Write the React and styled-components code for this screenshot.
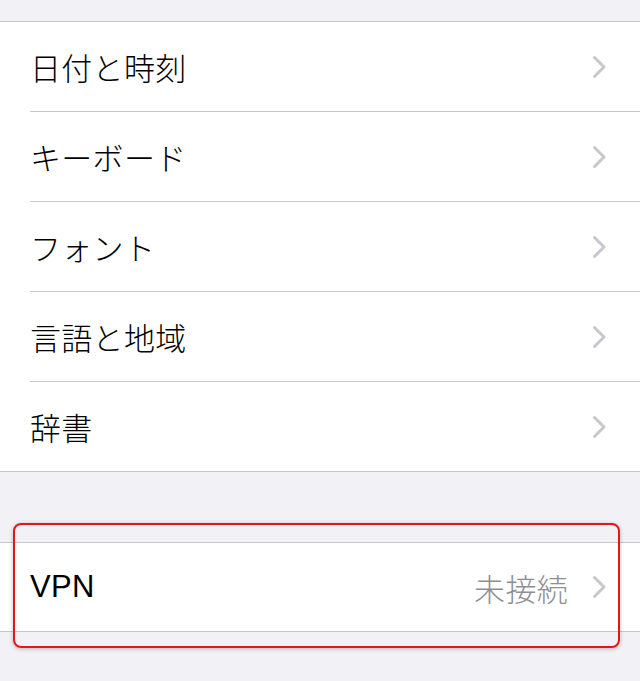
import React from "react";
import styled, { createGlobalStyle } from "styled-components";

const GlobalStyle = createGlobalStyle`
    html, body {
        margin: 0;
        padding: 0;
        background: #f1f1f6;
    }
    body {
        font-family: "Liberation Sans", "Noto Sans CJK JP", sans-serif;
        -webkit-font-smoothing: antialiased;
    }
`;

const Page = styled.div`
    width: 640px;
    height: 681px;
    overflow: hidden;
    background: #f1f1f6;
    padding-top: 21px;
    box-sizing: border-box;
`;

const Group = styled.div`
    position: relative;
    background: #ffffff;
    border-top: 1px solid #c8c7cc;
    border-bottom: 1px solid #c8c7cc;
    margin-bottom: ${(p) => p.gap || 0}px;
`;

const Row = styled.div`
    height: ${(p) => p.h || 90}px;
    display: flex;
    align-items: center;
    padding-left: 30px;
`;

const RowBody = styled.div`
    flex: 1;
    height: 100%;
    display: flex;
    align-items: center;
    padding-right: 33px;
    border-bottom: ${(p) => (p.last ? "none" : "1px solid #c8c7cc")};
    box-sizing: border-box;
`;

const Label = styled.span`
    flex: 1;
    font-size: 31px;
    font-weight: 300;
    color: #000000;
    letter-spacing: 0.3px;
`;

const Detail = styled.span`
    font-size: 31px;
    font-weight: 300;
    color: #8e8e93;
    letter-spacing: 0.3px;
    margin-right: 24px;
`;

const Highlight = styled.div`
    position: absolute;
    top: -20px;
    left: 13px;
    width: 607px;
    height: 125px;
    box-sizing: border-box;
    border: 2px solid #e8141c;
    border-radius: 8px;
    box-shadow: 0 1px 4px rgba(0, 0, 0, 0.25);
    pointer-events: none;
`;

const Chevron = () => (
    <svg width="15" height="24" viewBox="0 0 15 24">
        <path d="M2.5 2.5 L12 12 L2.5 21.5" fill="none" stroke="#c7c7cc" strokeWidth="3" strokeLinecap="round" strokeLinejoin="round" />
    </svg>
);

const items = ["日付と時刻", "キーボード", "フォント", "言語と地域", "辞書"];

const App = () => {
    return (
        <Page>
            <GlobalStyle />
            <Group gap={70}>
                {items.map((item, i) => {
                    const last = i === items.length - 1;
                    return (
                        <Row key={item} h={last ? 89 : 90}>
                            <RowBody last={last}>
                                <Label>{item}</Label>
                                <Chevron />
                            </RowBody>
                        </Row>
                    );
                })}
            </Group>
            <Group>
                <Row h={88}>
                    <RowBody last>
                        <Label>VPN</Label>
                        <Detail>未接続</Detail>
                        <Chevron />
                    </RowBody>
                </Row>
                <Highlight />
            </Group>
        </Page>
    );
};

export default App;
